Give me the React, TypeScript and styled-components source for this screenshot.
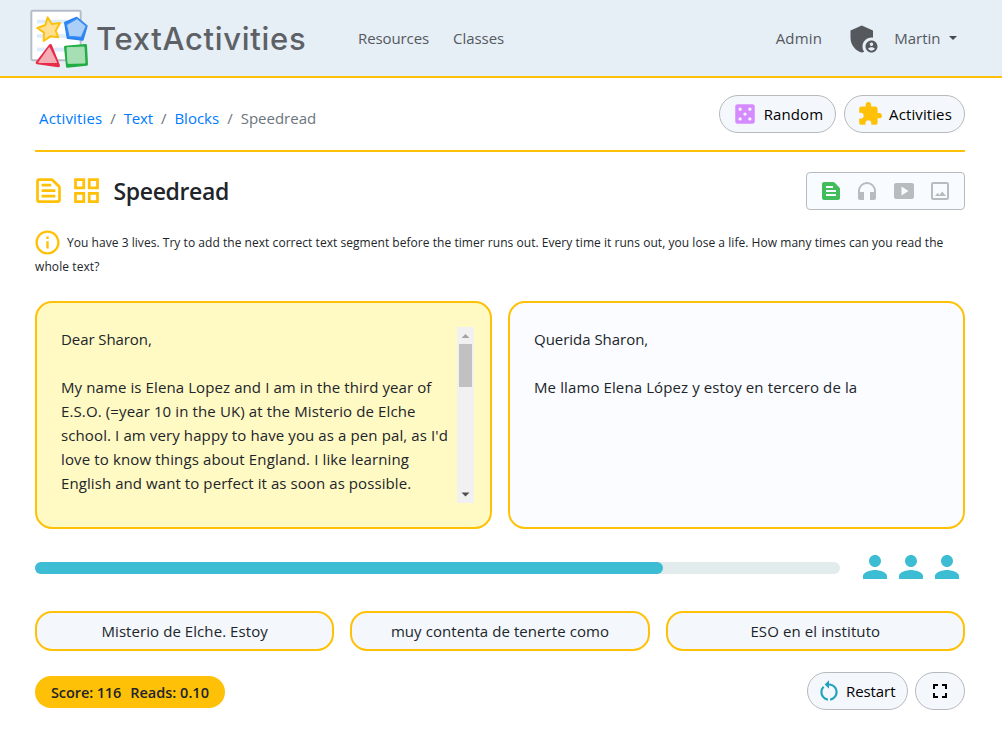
import React from "react";
import styled, { createGlobalStyle } from "styled-components";
import {
  MdAdminPanelSettings,
  MdCasino,
  MdExtension,
  MdFullscreen,
  MdHeadphones,
  MdOutlineGridView,
  MdInfoOutline,
  MdOutlineTextSnippet,
  MdPerson,
  MdRestartAlt,
  MdSmartDisplay,
  MdTextSnippet,
} from "react-icons/md";

const amber = "#ffc107";
const teal = "#3dbdd3";

const GlobalStyle = createGlobalStyle`
  *, *::before, *::after { box-sizing: border-box; }
  html, body { margin: 0; background: #fff; overflow: hidden; }
  body {
    font-family: "Open Sans", "Noto Sans", sans-serif;
    font-size: 15px;
    line-height: 24px;
    color: #212529;
  }
  svg { display: block; flex: none; }
  button { font: inherit; color: inherit; margin: 0; padding: 0; }
`;

const Label = styled.span<{ $track?: number }>`
  letter-spacing: ${(p) => p.$track ?? 0}px;
  white-space: nowrap;
`;

const Header = styled.header`
  height: 78px;
  display: flex;
  align-items: center;
  background: #e6eef6;
  border-bottom: 2px solid ${amber};
  padding: 0 45.5px 0 28px;
`;

const Brand = styled.a`
  display: flex;
  align-items: center;
  gap: 6px;
  width: 306px;
  color: #5d6165;
  font: 500 31px/40px Inter, sans-serif;

  > span { padding-top: 2px; }
`;

const Nav = styled.nav`
  display: flex;
  gap: 24px;
  margin-left: 24px;
  color: #55595e;
`;

const Account = styled.div`
  display: flex;
  align-items: center;
  margin-left: auto;
  color: #55595e;

  > svg { margin: 2px 12.5px 0 23.5px; }
`;

const Caret = styled.span`
  margin-left: 8px;
  border: 4.5px solid transparent;
  border-top-color: #44494e;
  border-bottom: 0;
`;

const Main = styled.main`
  padding: 17px 37px 0 35px;
`;

const CrumbRow = styled.div`
  display: flex;
  justify-content: space-between;
  height: 57px;
  border-bottom: 2px solid ${amber};
`;

const Crumbs = styled.nav`
  display: flex;
  gap: 8px;
  padding: 11px 0 0 4px;
  color: #6c757d;

  a { color: #007bff; }
`;

const Actions = styled.div<{ $gap?: number }>`
  display: flex;
  gap: ${(p) => p.$gap ?? 8}px;
`;

const Pill = styled.button<{ $width: number; $gap?: number; $end?: number }>`
  display: flex;
  align-items: center;
  justify-content: center;
  gap: ${(p) => p.$gap ?? 6}px;
  width: ${(p) => p.$width}px;
  height: 38px;
  padding-right: ${(p) => p.$end ?? 0}px;
  border: 1px solid #b6babd;
  border-radius: 19px;
  background: #f4f8fc;
  color: #000;
`;

const TitleRow = styled.div`
  display: flex;
  align-items: center;
  height: 38px;
  margin-top: 20px;
  color: ${amber};

  > div > svg { margin-top: -1px; }
`;

const Title = styled.h1`
  margin: 0 auto 0 11px;
  font-size: 23px;
  line-height: 30px;
  font-weight: 600;
  color: #212529;
`;

const TitleIcons = styled.div`
  display: flex;
  gap: 5px;
  margin-left: -3.5px;
`;

const MediaBox = styled.div`
  display: flex;
  align-items: center;
  gap: 12.4px;
  width: 159px;
  height: 38px;
  padding-left: 12px;
  border: 1px solid #b6babd;
  border-radius: 4px;
  background: #f8fbff;
  color: #b8bcbf;
`;

const Hint = styled.p`
  margin: 21px 0 0;
  font-size: 12px;
  line-height: 24px;

  svg { display: inline-block; vertical-align: -5px; margin: -4px 5.5px -5px -2.5px; }
`;

const Panels = styled.div`
  display: grid;
  grid-template-columns: 457px 457px;
  gap: 16px;
  margin-top: 22px;
`;

const Panel = styled.section<{ $fill: string }>`
  display: flex;
  justify-content: space-between;
  height: 228px;
  padding: 24px 16px 24px 24px;
  border: 2px solid ${amber};
  border-radius: 17px;
  background: ${(p) => p.$fill};
`;

const Lines = styled.div`
  display: flex;
  flex-direction: column;
`;

const Line = styled(Label)`
  height: 24px;
`;

const Scrollbar = styled.div`
  display: flex;
  flex-direction: column;
  align-items: center;
  justify-content: space-between;
  width: 17px;
  height: 176px;
  background: #f1f1f1;
`;

const Thumb = styled.div`
  width: 13px;
  height: 43px;
  margin-bottom: auto;
  background: #c1c1c1;
`;

const ProgressRow = styled.div`
  display: flex;
  align-items: center;
  height: 36px;
  margin-top: 21px;
`;

const Track = styled.div`
  width: 805px;
  height: 12px;
  border-radius: 6px;
  background: #e2ecec;
`;

const Fill = styled.div`
  height: 100%;
  border-radius: 6px;
  background: ${teal};
`;

const Lives = styled.div`
  display: flex;
  margin: -2px 0 0 17px;
  color: ${teal};
`;

const Choices = styled.div`
  display: grid;
  grid-template-columns: repeat(3, 1fr);
  gap: 16px;
  margin-top: 25px;
`;

const Choice = styled.button`
  height: 40px;
  border: 2px solid ${amber};
  border-radius: 17px;
  background: #f4f8fc;
  color: #212529;
`;

const Footer = styled.footer`
  display: flex;
  align-items: center;
  justify-content: space-between;
  margin-top: 21px;
`;

const Score = styled.div`
  display: flex;
  gap: 9px;
  height: 32px;
  width: 190px;
  margin-top: 2px;
  padding: 5px 0 0 16px;
  border-radius: 16px;
  background: ${amber};
  font-weight: 600;
  font-size: 14.5px;
`;

const Logo = () => (
  <svg width="62" height="62" viewBox="0 0 186 186" strokeLinejoin="round">
    <rect x="10" y="11.5" width="148" height="148" rx="4" fill="#fff" stroke="#b5bdc9" strokeWidth="6" />
    <path d="M27 44h114M27 87h114M27 128h114" stroke="#dcecfc" strokeWidth="11" />
    <path d="M59 31l12 20 25-3-13 23 8 20-24-3-20 14 1-25-20-14 24-9z" fill="#ffdf91" stroke="#fdc10d" strokeWidth="6" />
    <path d="M111 47l35-15 30 25-12 41-45-5z" fill="#2a83ee" stroke="#2a83ee" strokeWidth="6" />
    <path d="M115 53l32-19 28 23-15 34-37-3z" fill="#accff8" stroke="#3a8df3" strokeWidth="4" />
    <path d="M67 116L91 176 28 167z" fill="#e72d48" stroke="#e72d48" strokeWidth="10" />
    <path d="M64 123L85 166 33 166z" fill="#f4adb5" stroke="#f4adb5" strokeWidth="4" />
    <path d="M112 120l61-5 3 57-58 6z" fill="#20ad43" stroke="#20ad43" strokeWidth="8" />
    <path d="M117 122l51-2 3 48-51 1z" fill="#a6dfb3" stroke="#a6dfb3" strokeWidth="3" />
  </svg>
);

const ImageIcon = () => (
  <svg width="24" height="24" viewBox="0 0 24 24" fill="none">
    <rect x="4" y="4" width="16" height="16" rx="1.2" stroke="currentColor" strokeWidth="2" />
    <path d="M7 17l2.6-3 1.9 2 2.7-3.6 3.8 4.6z" fill="currentColor" />
  </svg>
);

const Arrow = ({ up }: { up?: boolean }) => (
  <svg width="17" height="17" viewBox="0 0 17 17">
    <path d={up ? "M4.5 11h8l-4-4z" : "M4.5 6.5h8l-4 4z"} fill={up ? "#a3a3a3" : "#505050"} />
  </svg>
);

const sourceLines: [string, number][] = [
  ["Dear Sharon,", -0.08],
  ["", 0],
  ["My name is Elena Lopez and I am in the third year of", 0.1],
  ["E.S.O. (=year 10 in the UK) at the Misterio de Elche", 0.12],
  ["school. I am very happy to have you as a pen pal, as I'd", 0.11],
  ["love to know things about England. I like learning", 0.14],
  ["English and want to perfect it as soon as possible.", 0.08],
];

const targetLines: [string, number][] = [
  ["Querida Sharon,", -0.03],
  ["", 0],
  ["Me llamo Elena López y estoy en tercero de la", 0.11],
];

const choices: [string, number][] = [
  ["Misterio de Elche. Estoy", 0.07],
  ["muy contenta de tenerte como", 0.07],
  ["ESO en el instituto", 0.1],
];

export default function App() {
  const progress = 78;
  return (
    <>
      <GlobalStyle />
      <Header>
        <Brand>
          <Logo />
          <Label $track={0.7}>TextActivities</Label>
        </Brand>
        <Nav>
          <Label $track={-0.1}>Resources</Label>
          <Label $track={-0.05}>Classes</Label>
        </Nav>
        <Account>
          <Label $track={0.2}>Admin</Label>
          <MdAdminPanelSettings size={36} />
          <Label>Martin</Label>
          <Caret />
        </Account>
      </Header>
      <Main>
        <CrumbRow>
          <Crumbs>
            <a><Label $track={0.15}>Activities</Label></a>
            <span>/</span>
            <a><Label $track={-0.2}>Text</Label></a>
            <span>/</span>
            <a><Label>Blocks</Label></a>
            <span>/</span>
            <Label>Speedread</Label>
          </Crumbs>
          <Actions>
            <Pill $width={117}>
              <MdCasino size={26} color="#d58bff" />
              <Label $track={0.1}>Random</Label>
            </Pill>
            <Pill $width={121}>
              <MdExtension size={26} color={amber} />
              <Label $track={0.1}>Activities</Label>
            </Pill>
          </Actions>
        </CrumbRow>
        <TitleRow>
          <TitleIcons>
            <MdOutlineTextSnippet size={33} />
            <MdOutlineGridView size={33} />
          </TitleIcons>
          <Title><Label $track={-0.35}>Speedread</Label></Title>
          <MediaBox>
            <MdTextSnippet size={24} color="#42bd5b" />
            <MdHeadphones size={24} />
            <MdSmartDisplay size={24} />
            <ImageIcon />
          </MediaBox>
        </TitleRow>
        <Hint>
          <MdInfoOutline size={29} color={amber} />
          <Label $track={0.041}>
            You have 3 lives. Try to add the next correct text segment before the timer runs out. Every time it runs out, you lose a life. How many times can you read the
          </Label>
          <br />
          <Label $track={0.09}>whole text?</Label>
        </Hint>
        <Panels>
          <Panel $fill="#fff9c4">
            <Lines>
              {sourceLines.map(([text, track], i) => (
                <Line key={i} $track={track}>{text}</Line>
              ))}
            </Lines>
            <Scrollbar>
              <Arrow up />
              <Thumb />
              <Arrow />
            </Scrollbar>
          </Panel>
          <Panel $fill="#fafcff">
            <Lines>
              {targetLines.map(([text, track], i) => (
                <Line key={i} $track={track}>{text}</Line>
              ))}
            </Lines>
          </Panel>
        </Panels>
        <ProgressRow>
          <Track>
            <Fill style={{ width: `${progress}%` }} />
          </Track>
          <Lives>
            <MdPerson size={36} />
            <MdPerson size={36} />
            <MdPerson size={36} />
          </Lives>
        </ProgressRow>
        <Choices>
          {choices.map(([text, track]) => (
            <Choice key={text}><Label $track={track}>{text}</Label></Choice>
          ))}
        </Choices>
        <Footer>
          <Score>
            <Label $track={-0.1}>Score: 116</Label>
            <Label>Reads: 0.10</Label>
          </Score>
          <Actions $gap={7}>
            <Pill $width={101} $gap={4.5} $end={4}>
              <MdRestartAlt size={26} color="#22a2bd" />
              <Label $track={-0.1}>Restart</Label>
            </Pill>
            <Pill $width={50}>
              <MdFullscreen size={24} />
            </Pill>
          </Actions>
        </Footer>
      </Main>
    </>
  );
}
